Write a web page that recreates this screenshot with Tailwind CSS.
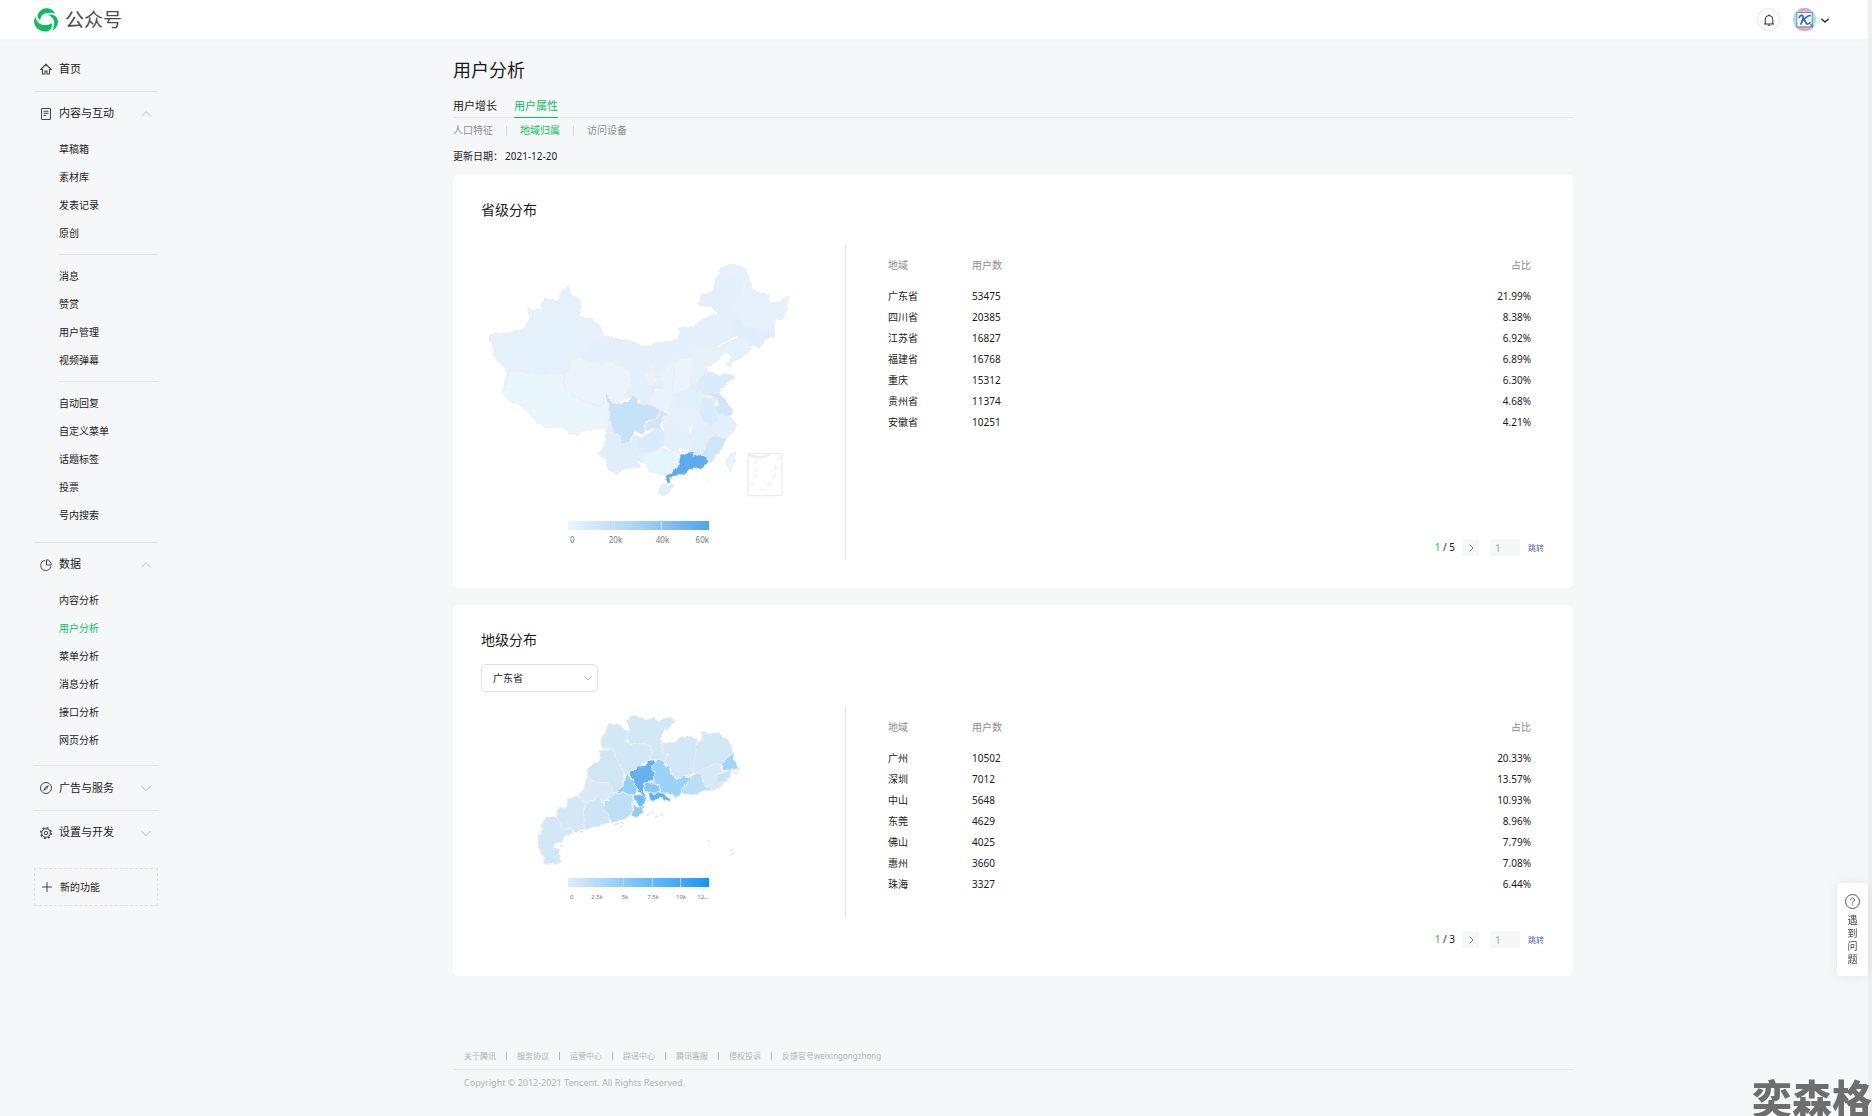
<!DOCTYPE html>
<html lang="zh-CN">

<head>
    <meta charset="UTF-8">
    <meta name="viewport" content="width=device-width, initial-scale=1.0">
    <title>公众号</title>
    <script src="https://cdn.jsdelivr.net/npm/@tailwindcss/browser@4"></script>
</head>

<body class="min-h-screen border-r-4 border-[#efefef] bg-[#f6f7f9] font-['Noto_Sans','Noto_Sans_CJK_SC',sans-serif] text-[10px] text-[#1a1a1a]">
    <header class="flex h-[39px] items-center justify-between bg-white pr-[38px] pl-[34px] shadow-[0_1px_2px_rgba(0,0,0,0.03)]">
        <a href="#" class="flex items-center gap-[7px]">
            <svg class="size-6" viewBox="0 0 72 72" fill="#07c160">
                <path d="M10 24 C15 8 27 0 40 1 C51 2 60 9 64 17 C56 14 49 14 44 16 C34 12 22 19 18 36 C14 33 11 29 10 24Z" />
                <path d="M42 20 C62 18 72 28 72 42 C71 55 64 64 54 69 C58 63 60 57 59 52 C64 40 58 28 42 20Z" />
                <path d="M5 26 C6 38 15 49 29 51 C38 52 45 51 54 46 C55 57 50 67 42 70 C28 73 12 67 4 54 C-2 44 0 33 5 26Z" />
            </svg>
            <span class="text-[19px] leading-6 text-[#4c4c4c]">公众号</span>
        </a>
        <div class="flex items-center">
            <button type="button" aria-label="通知" class="flex size-[23px] items-center justify-center rounded-full border border-[#e4e5e7]">
                <svg class="size-3" viewBox="0 0 24 24" fill="none" stroke="#2b2b2b" stroke-width="2">
                    <path d="M2 20h20M4.500 20V10.500a7.500 7.500 0 0 1 15 0V20M9.500 22.500h5M12 3V1" />
                </svg>
            </button>
            <button type="button" aria-label="账号" class="ml-[13px] flex items-center gap-1">
                <svg class="size-[23px]" viewBox="0 0 66 66">
                    <clipPath id="face"><circle cx="33" cy="33" r="33" /></clipPath>
                    <g clip-path="url(#face)">
                        <rect width="66" height="66" fill="#a9dfe8" />
                        <path d="M12 0h42l-9 12-12-5-12 5z" fill="#f0a0bd" />
                        <path d="M0 50h66v16H0z" fill="#e8a5c3" />
                        <path d="M4 16l8-6 4 8-8 6z" fill="#e6d36a" />
                        <rect x="11" y="13" width="44" height="41" fill="#fff" stroke="#5c93b8" stroke-width="3" />
                        <path d="M18 27c2-7 11-8 11-1 0 7-3 13-6 20M49 22c-8-2-11 8-22 12 11-2 8 11 14 12 4 0 6-1 8-4" fill="none" stroke="#3264cf" stroke-width="5" stroke-linecap="round" />
                        <path d="M50 46l8 10" stroke="#4b86ad" stroke-width="4" />
                    </g>
                </svg>
                <svg class="size-2.5" viewBox="0 0 30 30" fill="none" stroke="#2b2b2b" stroke-width="4"><path d="M4 11l11 10 11-10" /></svg>
            </button>
        </div>
    </header>

    <div class="flex">
        <aside class="w-[124px] shrink-0 ml-[34px] pt-2">
            <nav>
                <a href="#" class="flex h-[45px] items-center gap-[7px] border-b border-[#e1e3e5] pl-1.5 text-[11px]">
                    <svg class="size-3" viewBox="0 0 24 24" fill="none" stroke="#444" stroke-width="2.200"><path d="M1.500 13L12 2.500 22.500 13H19v9h-5v-6h-4v6H5v-9z" /></svg>
                    首页
                </a>

                <section class="border-b border-[#e1e3e5] pb-[13px]">
                    <button type="button" class="flex h-[43px] w-full items-center gap-[7px] pr-[7px] pl-1.5 text-[11px]">
                        <svg class="size-3" viewBox="0 0 24 24" fill="none" stroke="#444" stroke-width="2"><rect x="3" y="1" width="18" height="22" rx="1" /><path d="M7 6.500h10M7 10.500h10M7 15h5" /></svg>
                        <span class="flex-1 text-left">内容与互动</span>
                        <svg class="size-2.5" viewBox="0 0 30 30" fill="none" stroke="#b4b6b8" stroke-width="3"><path d="M1 22l14-14 14 14" /></svg>
                    </button>
                    <ul class="pl-[25px] leading-[28px]">
                        <li><a href="#">草稿箱</a></li>
                        <li><a href="#">素材库</a></li>
                        <li><a href="#">发表记录</a></li>
                        <li><a href="#">原创</a></li>
                    </ul>
                    <hr class="my-[7px] ml-[25px] border-[#e1e3e5]">
                    <ul class="pl-[25px] leading-[28px]">
                        <li><a href="#">消息</a></li>
                        <li><a href="#">赞赏</a></li>
                        <li><a href="#">用户管理</a></li>
                        <li><a href="#">视频弹幕</a></li>
                    </ul>
                    <hr class="my-[7px] ml-[25px] border-[#e1e3e5]">
                    <ul class="pl-[25px] leading-[28px]">
                        <li><a href="#">自动回复</a></li>
                        <li><a href="#">自定义菜单</a></li>
                        <li><a href="#">话题标签</a></li>
                        <li><a href="#">投票</a></li>
                        <li><a href="#">号内搜索</a></li>
                    </ul>
                </section>

                <section class="border-b border-[#e1e3e5] pb-[11px]">
                    <button type="button" class="flex h-[43px] w-full items-center gap-[7px] pr-[7px] pl-1.5 text-[11px]">
                        <svg class="size-3" viewBox="0 0 24 24" fill="none" stroke="#444" stroke-width="2"><path d="M10 3a10 10 0 1 0 11.500 11.500M13 1.500V12h9.500A10 10 0 0 0 13 1.500z" /></svg>
                        <span class="flex-1 text-left">数据</span>
                        <svg class="size-2.5" viewBox="0 0 30 30" fill="none" stroke="#b4b6b8" stroke-width="3"><path d="M1 22l14-14 14 14" /></svg>
                    </button>
                    <ul class="pl-[25px] leading-[28px]">
                        <li><a href="#">内容分析</a></li>
                        <li><a href="#" class="text-[#07c160]">用户分析</a></li>
                        <li><a href="#">菜单分析</a></li>
                        <li><a href="#">消息分析</a></li>
                        <li><a href="#">接口分析</a></li>
                        <li><a href="#">网页分析</a></li>
                    </ul>
                </section>

                <button type="button" class="flex h-[45px] w-full items-center gap-[7px] border-b border-[#e1e3e5] pr-[7px] pl-1.5 text-[11px]">
                    <svg class="size-3" viewBox="0 0 24 24" fill="none" stroke="#444" stroke-width="2"><circle cx="12" cy="12" r="11" /><path d="M18 6l-4 8-8 4 4-8z" fill="#444" stroke="none" /><circle cx="12" cy="12" r="1.500" fill="#fff" stroke="none" /></svg>
                    <span class="flex-1 text-left">广告与服务</span>
                    <svg class="size-2.5" viewBox="0 0 30 30" fill="none" stroke="#b4b6b8" stroke-width="3"><path d="M1 9l14 14L29 9" /></svg>
                </button>
                <button type="button" class="flex h-[43px] w-full items-center gap-[7px] pr-[7px] pl-1.5 text-[11px]">
                    <svg class="size-3" viewBox="0 0 24 24" fill="none" stroke="#444" stroke-width="2"><circle cx="12" cy="12" r="8.500" /><circle cx="12" cy="12" r="3.500" /><circle cx="12" cy="12" r="10.500" stroke-width="3" stroke-dasharray="4.120 4.120" /></svg>
                    <span class="flex-1 text-left">设置与开发</span>
                    <svg class="size-2.5" viewBox="0 0 30 30" fill="none" stroke="#b4b6b8" stroke-width="3"><path d="M1 9l14 14L29 9" /></svg>
                </button>
            </nav>
            <button type="button" class="mt-3.5 flex h-[38px] w-full items-center gap-2 border border-dashed border-[#dcdee0] pl-[7px]">
                <svg class="size-2.5" viewBox="0 0 20 20" fill="none" stroke="#444" stroke-width="2"><path d="M10 0v20M0 10h20" /></svg>
                新的功能
            </button>
        </aside>

        <div class="min-w-0 flex-1">
            <main class="mx-auto max-w-[1120px] pt-[18px]">
                <h1 class="text-lg leading-[27px]">用户分析</h1>
                <nav class="mt-2.5 flex gap-[17px] border-b border-[#e1e3e5] text-[11px]">
                    <a href="#" class="-mb-px h-6 leading-[23px]">用户增长</a>
                    <a href="#" class="-mb-px h-6 border-b border-[#07c160] leading-[23px] text-[#07c160]">用户属性</a>
                </nav>
                <nav class="flex h-[25px] items-center text-[#8c8c8c]">
                    <a href="#">人口特征</a>
                    <span class="mx-[13px] h-2.5 w-px bg-[#d9dbdd]"></span>
                    <a href="#" class="text-[#07c160]">地域归属</a>
                    <span class="mx-[13px] h-2.5 w-px bg-[#d9dbdd]"></span>
                    <a href="#">访问设备</a>
                </nav>
                <p class="leading-[26px]">更新日期：<span class="ml-0.5">2021-12-20</span></p>

                <section class="mt-1.5 rounded-[5px] bg-white p-7">
                    <h2 class="text-sm leading-[14px]">省级分布</h2>
                    <div class="mt-7 flex">
                        <div class="h-[315px] w-[365px] shrink-0 border-r border-[#e1e3e5]">
                            <svg class="h-[260px] w-[364px]" viewBox="33 15 1092 780">
                                <!-- roughens the borders so they read as coastline -->
                                <filter id="rough" x="0" y="0" width="1" height="1" color-interpolation-filters="sRGB">
                                    <feTurbulence type="fractalNoise" baseFrequency="0.060" numOctaves="2" seed="4" />
                                    <feDisplacementMap in="SourceGraphic" scale="14" xChannelSelector="R" yChannelSelector="G" />
                                </filter>
                                <g filter="url(#rough)" stroke="#ecedf0" stroke-width="3" stroke-linejoin="round">
                                    <path fill="#e4f1fb" d="M57 298L62 283 82 278 95 284 108 275 130 276 165 264 177 240 173 207 210 208 224 170 238 178 264 180 275 153 292 142 300 150 302 162 328 178 334 205 328 225 345 235 370 240 395 262 401 290 370 305 345 335 338 354 302 360 304 380 300 395 283 402 255 398 215 403 190 398 130 395 108 400 104 380 88 368 70 345 68 312z" />
                                    <path fill="#e9f6fc" d="M108 400L130 395 190 398 215 403 255 398 283 402 283 445 300 462 335 480 360 485 380 500 400 490 405 482 418 500 418 570 400 565 370 568 345 570 320 583 300 580 295 570 275 565 255 558 245 565 225 560 200 545 180 525 165 508 145 492 125 488 108 472 100 462 98 438 108 430z" />
                                    <path fill="#ebf4fd" d="M302 360L338 354 370 366 400 374 410 364 440 370 460 378 480 398 488 425 478 450 462 462 470 475 440 487 425 490 415 465 405 460 402 485 380 500 335 480 300 462 283 445 283 402 300 395z" />
                                    <path fill="#e3f0fc" d="M401 290L418 300 420 325 450 332 448 345 470 365 505 370 515 398 530 404 528 425 545 442 562 418 578 425 578 445 555 447 545 460 540 495 520 495 505 475 485 467 478 475 462 462 478 450 488 425 480 398 460 378 440 370 410 364 400 374 370 366 338 354 345 335 370 305z" />
                                    <path fill="#e3effb" d="M401 290L420 292 440 298 470 298 495 308 528 320 560 308 605 305 630 285 625 262 640 257 655 265 680 252 705 232 742 222 735 208 718 198 688 198 686 190 695 160 712 160 732 148 737 118 752 100 745 92 760 96 790 120 812 122 818 145 812 170 795 195 785 210 800 235 780 240 782 268 792 285 775 300 745 315 738 325 720 318 700 315 670 322 662 350 630 358 612 368 590 378 580 400 562 418 552 415 550 370 540 375 538 395 520 402 505 370 470 365 448 345 450 332 420 325 418 300z" />
                                    <path fill="#e4f1fb" d="M745 92L755 80 785 73 820 80 830 95 840 125 850 152 875 158 895 168 900 188 925 185 955 168 948 210 938 238 915 240 913 275 890 270 880 275 850 260 830 258 800 235 785 210 795 195 812 170 820 145 812 122 790 120 760 96z" />
                                    <path fill="#deeefb" d="M800 235L830 258 850 260 880 275 913 275 912 290 885 300 870 320 850 315 838 332 830 300 805 292 792 285 782 268 780 240z" />
                                    <path fill="#e2f1fa" d="M738 325L775 305 805 292 830 300 838 332 815 352 795 362 775 378 770 372 785 350 770 340 755 350 745 362 735 340z" />
                                    <path fill="#e4f1fb" d="M670 322L700 315 720 318 738 325 742 355 728 375 710 380 712 392 690 410 682 440 660 440 665 400 662 350z" />
                                    <path fill="#e6f2fb" d="M685 352L700 340 712 350 716 378 702 372 698 360 686 362z" />
                                    <path fill="#edf3fd" d="M612 368L640 355 662 350 668 368 660 440 650 450 605 462 610 420z" />
                                    <path fill="#e8f3fd" d="M590 378L612 368 610 420 605 462 610 480 595 515 570 505 540 495 545 460 578 445 578 425 562 418 580 400z" />
                                    <path fill="#ebf2fd" d="M552 368L550 400 555 415 545 442 528 425 522 404 538 395 542 375z" />
                                    <path fill="#daecfb" d="M690 410L712 392 735 400 742 410 765 400 795 408 780 425 755 445 745 458 720 465 690 458 678 440z" />
                                    <path fill="#e0effc" d="M660 440L682 440 690 458 705 465 712 475 685 490 690 515 650 500 625 502 610 480 605 462 650 450z" />
                                    <path fill="#e4f1fb" d="M610 480L625 502 650 500 690 515 700 550 670 560 620 552 583 560 580 540 598 525 595 515z" />
                                    <path fill="#e2effc" d="M583 560L620 552 655 560 662 585 658 632 625 625 612 632 585 615z" />
                                    <path fill="#e0effc" d="M662 585L670 560 700 550 728 558 735 583 715 600 698 645 668 645 660 632z" />
                                    <path fill="#e2f0fb" d="M748 522L780 530 798 545 790 575 768 598 735 583 728 558 742 545z" />
                                    <path fill="#d9ecfb" d="M705 470L735 480 735 500 748 522 742 545 728 558 700 550 690 515 685 490z" />
                                    <path fill="#cfe5f9" d="M705 462L745 458 765 475 778 500 790 515 780 528 748 522 735 500 748 495 738 478z" />
                                    <path fill="#cfe6fa" d="M735 583L768 598 750 640 715 668 705 650 698 645 710 600z" />
                                    <path fill="#e6f4fd" d="M515 642L560 632 585 628 612 632 625 625 632 645 625 680 605 700 588 708 555 700 535 690 530 672 510 665 522 655z" />
                                    <path fill="#deeefb" d="M408 568L420 562 442 580 460 610 478 608 490 590 510 588 495 600 500 625 515 640 522 655 505 665 510 678 455 690 445 702 412 688 408 658 385 642 402 620z" />
                                    <path fill="#daecfb" d="M495 600L530 585 553 562 583 575 585 615 560 632 515 642 500 625z" />
                                    <path fill="#c6e2f9" d="M402 462L412 465 425 487 460 490 478 480 485 467 503 475 505 490 540 495 572 508 560 530 550 542 525 545 522 560 530 575 520 585 495 572 485 590 478 608 460 610 442 580 420 562 418 500z" />
                                    <path fill="#cfe6fa" d="M572 508L598 525 580 535 570 555 583 575 553 562 530 575 522 550 550 542 565 530z" />
                                    <path fill="#5dacee" stroke="#5dacee" stroke-width="1" d="M650 638L672 637 668 650 695 645 712 655 713 668 700 682 660 688 650 698 610 708 598 715 600 728 592 728 588 712 605 700 625 680 632 645z" />
                                    <path fill="#deeefb" d="M567 745L580 732 610 735 602 755 585 768 568 760z" />
                                    <path fill="#e8f3fc" d="M797 635L792 668 780 697 767 668 775 645z" />
                                </g>
                                <g fill="none" stroke="#ededee" stroke-width="4">
                                    <rect x="834" y="641" width="102" height="126" rx="2" />
                                    <path d="M838 644q30 16 62-1" stroke-width="7" />
                                    <path d="M852 672l8-10M855 684l3 10M852 712l10-9M844 728l4 8M871 752l11-4M892 738l10-13M909 714l7-13M918 690l-2-14M920 660l12-14M697 716h3M709 721h4" />
                                </g>
                            </svg>
                            <div class="mt-4 ml-[87px] w-[141px]">
                                <div class="grid h-[9px] grid-cols-3 divide-x divide-[#d8e6f2] bg-linear-to-r from-[#eaf6fd] via-[#a9d2f6] to-[#4ba3ea]">
                                    <span></span><span></span><span></span>
                                </div>
                                <div class="mt-1 grid grid-cols-[24px_47px_47px_23px] text-center text-[8px] leading-3 text-[#777]">
                                    <span class="pl-0.5 text-left">0</span><span>20k</span><span>40k</span><span class="text-right">60k</span>
                                </div>
                            </div>
                        </div>
                        <div class="flex flex-1 flex-col justify-between pb-1 pl-[42px]">
                            <div class="pr-3.5">
                                <table class="w-full text-left">
                                    <thead>
                                        <tr class="h-[41px] text-[#8c8c8c]">
                                            <th class="w-[84px] font-normal">地域</th>
                                            <th class="font-normal">用户数</th>
                                            <th class="text-right font-normal">占比</th>
                                        </tr>
                                    </thead>
                                    <tbody class="leading-[21px]">
                                        <tr><td>广东省</td><td>53475</td><td class="text-right">21.99%</td></tr>
                                        <tr><td>四川省</td><td>20385</td><td class="text-right">8.38%</td></tr>
                                        <tr><td>江苏省</td><td>16827</td><td class="text-right">6.92%</td></tr>
                                        <tr><td>福建省</td><td>16768</td><td class="text-right">6.89%</td></tr>
                                        <tr><td>重庆</td><td>15312</td><td class="text-right">6.30%</td></tr>
                                        <tr><td>贵州省</td><td>11374</td><td class="text-right">4.68%</td></tr>
                                        <tr><td>安徽省</td><td>10251</td><td class="text-right">4.21%</td></tr>
                                    </tbody>
                                </table>
                            </div>
                            <div class="flex h-[17px] items-center justify-end pr-px">
                                <span><span class="text-[#07c160]">1</span> / 5</span>
                                <button type="button" aria-label="下一页" class="ml-[7px] flex size-[17px] items-center justify-center bg-[#f6f7f9]">
                                    <svg class="size-2" viewBox="0 0 24 24" fill="none" stroke="#777" stroke-width="3"><path d="M8 2l10 10L8 22" /></svg>
                                </button>
                                <input type="text" aria-label="页码" value="1" class="ml-[11px] h-[17px] w-[30px] bg-[#f6f7f9] pl-[5px] text-[#a6a6a6]">
                                <button type="button" class="ml-2 text-[8px] text-[#576b95]">跳转</button>
                            </div>
                        </div>
                    </div>
                </section>

                <section class="mt-[17px] rounded-[5px] bg-white p-7">
                    <h2 class="text-sm leading-[14px]">地级分布</h2>
                    <div class="relative mt-[17px] w-[117px]">
                        <select aria-label="省份" class="block h-7 w-full appearance-none rounded-[5px] border border-[#dfe0e2] bg-white pl-[11px]">
                            <option>广东省</option>
                        </select>
                        <svg class="pointer-events-none absolute top-2.5 right-1.5 size-2" viewBox="0 0 24 24" fill="none" stroke="#b4b6b8" stroke-width="3"><path d="M1 8l11 10L23 8" /></svg>
                    </div>
                    <div class="mt-[15px] flex items-start">
                        <div class="h-[210px] w-[365px] shrink-0 border-r border-[#e1e3e5]">
                            <svg class="h-[171px] w-[364px]" viewBox="-177 21 1092 513">
                                <g filter="url(#rough)" fill="#d3e8f6" stroke="#eceff2" stroke-width="3" stroke-linejoin="round">
                                    <path d="M257 62L270 52 286 43 300 55 335 58 342 50 350 62 390 52 403 66 390 82 375 90 360 115 368 125 365 160 385 158 375 180 345 180 330 182 335 155 325 132 270 130 260 110 268 80z" />
                                    <path d="M205 70L245 75 250 90 265 92 260 125 270 130 325 132 335 155 330 182 298 198 268 218 252 222 240 195 225 170 213 142 205 148 185 145 182 120 195 100z" />
                                    <path fill="#d0e6f5" d="M180 152L205 150 213 142 225 170 240 195 252 222 248 245 248 262 220 280 210 250 175 247 145 235 138 222 145 205 160 190 178 185z" />
                                    <path fill="#d9eaf6" d="M138 235L175 247 210 250 215 260 222 282 192 305 175 293 150 305 130 303 115 285 135 262z" />
                                    <path d="M100 288L115 290 130 303 145 305 130 330 135 388 105 395 90 385 65 390 62 370 50 355 52 328 80 322 82 295z" />
                                    <path fill="#cfe5f7" d="M150 305L175 293 192 308 190 328 205 345 210 368 180 378 135 388 130 330 140 310z" />
                                    <path d="M18 352L50 350 62 370 65 390 95 388 98 400 75 410 70 425 40 430 55 450 58 470 65 482 40 494 12 492 10 470 0 455-10 430-5 405 8 390 2 378z" />
                                    <path fill="#bde0f7" d="M192 308L222 282 250 275 275 285 280 300 275 335 262 355 240 362 215 368 205 345 190 328z" />
                                    <path fill="#8fd0fb" d="M258 218L268 228 280 245 295 270 288 280 275 288 250 275 220 282 248 262 252 240z" />
                                    <path d="M368 125L400 128 420 112 455 105 468 118 468 160 460 185 458 225 435 228 410 240 398 220 388 200 372 190 385 158 365 160z" />
                                    <path d="M485 95L505 100 535 98 548 112 570 120 578 155 560 180 545 195 520 195 500 202 470 220 457 225 460 185 468 160 470 125 485 118z" />
                                    <path fill="#9ad3f9" d="M345 182L368 180 375 195 388 200 398 225 410 240 435 228 457 232 440 250 425 262 420 290 405 295 400 285 362 278 358 258 335 245 342 225 335 205z" />
                                    <path fill="#66b0ee" d="M345 180L348 188 335 200 342 225 335 245 312 250 308 270 322 298 310 290 295 270 285 255 270 225 268 218 298 198 320 195 318 185 330 180z" />
                                    <path fill="#9fd5fa" d="M578 155L580 175 598 205 575 210 548 210 545 190 560 178z" />
                                    <path fill="#d9eaf6" d="M500 202L520 195 540 195 548 210 545 218 528 228 535 245 550 250 545 262 515 270 490 255 485 225 470 218z" />
                                    <path fill="#c9e2f7" d="M548 218L575 208 572 225 560 245 540 248 528 238 530 226z" />
                                    <path fill="#bcdff8" d="M457 232L470 220 485 225 490 252 515 270 490 275 460 285 425 280 420 268 440 252z" />
                                    <path fill="#5bb5fb" d="M325 280L362 278 375 280 380 290 393 298 390 305 365 295 345 300 332 305z" />
                                    <path fill="#84c9fb" d="M312 250L340 248 358 258 362 278 335 280 318 278 308 265z" />
                                    <path fill="#90cef9" d="M280 312L298 325 312 318 305 340 288 355 275 345z" />
                                    <path fill="#6abdfb" d="M280 285L305 283 318 298 312 315 300 325 290 308z" />
                                </g>
                                <path d="M320 348l8-6M334 336l7 4M345 352l10-5M362 346l8-4M225 374l12-4M242 366l10 6M240 378l6 4M120 396l8-2M36 430l24-8M60 436l10 4M580 218l14 1" fill="none" stroke="#d5e3ee" stroke-width="4" />
                                <path d="M502 424l8-2M504 434h5M567 450q14-4 14 6-2 10-14 8" fill="none" stroke="#ebebec" stroke-width="5" />
                            </svg>
                            <div class="ml-[87px] w-[141px]">
                                <div class="grid h-[9px] grid-cols-5 divide-x divide-[#b9d9f0] bg-linear-to-r from-[#dcecf7] via-[#72c3fd] to-[#0594ff]">
                                    <span></span><span></span><span></span><span></span><span></span>
                                </div>
                                <div class="mt-1 grid grid-cols-[15px_28px_28px_28px_28px_14px] text-center text-[6px] leading-3 text-[#777]">
                                    <span class="pl-0.5 text-left">0</span><span>2.5k</span><span>5k</span><span>7.5k</span><span>10k</span><span class="text-right">12...</span>
                                </div>
                            </div>
                        </div>
                        <div class="flex-1 pl-[42px]">
                            <div class="pr-3.5">
                                <table class="w-full text-left">
                                    <thead>
                                        <tr class="h-[41px] text-[#8c8c8c]">
                                            <th class="w-[84px] font-normal">地域</th>
                                            <th class="font-normal">用户数</th>
                                            <th class="text-right font-normal">占比</th>
                                        </tr>
                                    </thead>
                                    <tbody class="leading-[21px]">
                                        <tr><td>广州</td><td>10502</td><td class="text-right">20.33%</td></tr>
                                        <tr><td>深圳</td><td>7012</td><td class="text-right">13.57%</td></tr>
                                        <tr><td>中山</td><td>5648</td><td class="text-right">10.93%</td></tr>
                                        <tr><td>东莞</td><td>4629</td><td class="text-right">8.96%</td></tr>
                                        <tr><td>佛山</td><td>4025</td><td class="text-right">7.79%</td></tr>
                                        <tr><td>惠州</td><td>3660</td><td class="text-right">7.08%</td></tr>
                                        <tr><td>珠海</td><td>3327</td><td class="text-right">6.44%</td></tr>
                                    </tbody>
                                </table>
                            </div>
                            <div class="mt-9 flex h-[17px] items-center justify-end pr-px">
                                <span><span class="text-[#07c160]">1</span> / 3</span>
                                <button type="button" aria-label="下一页" class="ml-[7px] flex size-[17px] items-center justify-center bg-[#f6f7f9]">
                                    <svg class="size-2" viewBox="0 0 24 24" fill="none" stroke="#777" stroke-width="3"><path d="M8 2l10 10L8 22" /></svg>
                                </button>
                                <input type="text" aria-label="页码" value="1" class="ml-[11px] h-[17px] w-[30px] bg-[#f6f7f9] pl-[5px] text-[#a6a6a6]">
                                <button type="button" class="ml-2 text-[8px] text-[#576b95]">跳转</button>
                            </div>
                        </div>
                    </div>
                </section>
            </main>

            <footer class="mx-auto mt-[70px] max-w-[1120px] text-[8px] leading-5 text-[#b2b2b2]">
                <div class="flex items-center border-b border-[#e1e3e5] pb-[3px] pl-[11px]">
                    <a href="#">关于腾讯</a><span class="mx-2.5 h-2 w-px bg-[#b2b2b2]"></span>
                    <a href="#">服务协议</a><span class="mx-2.5 h-2 w-px bg-[#b2b2b2]"></span>
                    <a href="#">运营中心</a><span class="mx-2.5 h-2 w-px bg-[#b2b2b2]"></span>
                    <a href="#">辟谣中心</a><span class="mx-2.5 h-2 w-px bg-[#b2b2b2]"></span>
                    <a href="#">腾讯客服</a><span class="mx-2.5 h-2 w-px bg-[#b2b2b2]"></span>
                    <a href="#">侵权投诉</a><span class="mx-2.5 h-2 w-px bg-[#b2b2b2]"></span>
                    <a href="#">反馈官号weixingongzhong</a>
                </div>
                <p class="pt-[3px] pl-[11px] text-[9px]">Copyright © 2012-2021 Tencent. All Rights Reserved.</p>
            </footer>
        </div>
    </div>

    <a href="#" class="fixed right-1 bottom-[140px] flex w-[31px] flex-col items-center rounded-[3px] bg-white pt-[11px] pb-2.5 leading-[13px] text-[#444] shadow-[0_0_12px_rgba(0,0,0,0.08)]">
        <svg class="mb-[5px] size-[15px]" viewBox="0 0 30 30" fill="none" stroke="#555" stroke-width="2"><circle cx="15" cy="15" r="14" /><path d="M11 12a4 4 0 1 1 6 3.500c-1.500 1-2 1.500-2 3.500M15 21v2" /></svg>
        <span class="w-2.5">遇到问题</span>
    </a>
    <div class="pointer-events-none fixed right-0 bottom-0 font-['Noto_Sans_CJK_SC',sans-serif] text-[40px] leading-[38px] font-black text-[#6e6e6e]">奕森格</div>
</body>

</html>
